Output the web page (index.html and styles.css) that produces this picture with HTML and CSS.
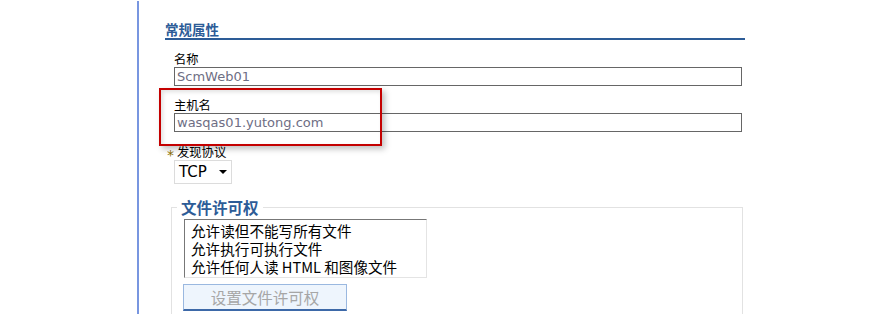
FILE: index.html
```html
<!DOCTYPE html>
<html lang="zh-CN">
<head>
    <meta charset="UTF-8">
    <title>常规属性</title>
    <link rel="stylesheet" href="styles.css">
</head>
<body>
    <div class="page">
        <div class="rail"></div>
        <div class="panel">
            <h2 class="section-title">常规属性</h2>
            <div class="fields">
                <div class="field">
                    <label class="field-label">名称</label>
                    <div class="text-box">ScmWeb01</div>
                </div>
                <div class="field host">
                    <div class="highlight"></div>
                    <label class="field-label">主机名</label>
                    <div class="text-box">wasqas01.yutong.com</div>
                </div>
                <div class="field">
                    <label class="field-label required"><span class="star">*</span>发现协议</label>
                    <div class="select-box">TCP <span class="caret"></span></div>
                </div>
            </div>
            <fieldset class="perm-group">
                <legend class="perm-title">文件许可权</legend>
                <div class="list-box">
                    <div class="list-item">允许读但不能写所有文件</div>
                    <div class="list-item">允许执行可执行文件</div>
                    <div class="list-item">允许任何人读 HTML 和图像文件</div>
                </div>
                <button class="perm-button">设置文件许可权</button>
            </fieldset>
        </div>
    </div>
</body>
</html>
```

FILE: styles.css
```css
body {
    margin: 0;
    padding: 0;
    background-color: #ffffff;
    font-family: "Noto Sans CJK SC", "DejaVu Sans", sans-serif;
    overflow: hidden;
}
.page {
    display: flex;
    height: 314px;
    overflow: hidden;
}
.rail {
    width: 137px;
    margin-top: 1px;
    border-right: 2px solid #7896e0;
    flex-shrink: 0;
}
.panel {
    margin-left: 26px;
    padding-top: 20px;
    width: 580px;
}
.section-title {
    margin: 0;
    font-size: 13.5px;
    line-height: 18px;
    font-weight: bold;
    color: #2d5c97;
    border-bottom: 2px solid #2d5c97;
}
.fields {
    padding-left: 9px;
    padding-top: 11px;
}
.field {
    margin-bottom: 11px;
}
.host {
    position: relative;
}
.field-label {
    display: block;
    height: 16px;
    font-size: 12.3px;
    line-height: 16px;
    color: #000000;
}
.required {
    margin-left: -7px;
    padding-top: 1px;
}
.star {
    font-family: "DejaVu Sans", sans-serif;
    font-size: 14px;
    line-height: 0;
    vertical-align: -3px;
    color: #8a6d00;
    margin-right: 3px;
}
.text-box {
    width: 564px;
    height: 17px;
    border: 1px solid #666666;
    font-family: "DejaVu Sans", sans-serif;
    font-size: 13px;
    line-height: 17px;
    color: #6e6e84;
    padding-left: 2px;
}
.highlight {
    position: absolute;
    left: -15px;
    top: -9px;
    width: 219px;
    height: 54px;
    border: 2px solid #c40000;
    box-shadow: 3px 3px 6px rgba(0,0,0,0.25), inset 2px 2px 4px rgba(0,0,0,0.12);
}
.select-box {
    display: flex;
    align-items: center;
    width: 52px;
    height: 22px;
    border: 1px solid #dcdcdc;
    font-family: "DejaVu Sans", sans-serif;
    font-size: 15px;
    color: #000000;
    padding-left: 4px;
}
.caret {
    width: 0;
    height: 0;
    margin-left: 12px;
    border-left: 4px solid transparent;
    border-right: 4px solid transparent;
    border-top: 4px solid #000000;
}
.perm-group {
    margin: 15px 0 0 6px;
    padding: 4px 0 20px 12px;
    width: 558px;
    border: 1px solid #e2e2e2;
    border-bottom: none;
}
.perm-title {
    padding: 0 4px;
    margin-left: -7px;
    font-size: 15.5px;
    line-height: 16px;
    font-weight: bold;
    color: #2d5c97;
}
.list-box {
    width: 235px;
    height: 55px;
    padding: 2px 0 0 6px;
    border-top: 1px solid #777777;
    border-left: 1px solid #777777;
    border-right: 1px solid #e4e4e4;
    border-bottom: 1px solid #e4e4e4;
    font-size: 14.6px;
    color: #000000;
}
.list-item {
    height: 18px;
    line-height: 18px;
}
.perm-button {
    display: block;
    margin-top: 6px;
    margin-left: -1px;
    width: 164px;
    height: 27px;
    background-color: #eef5fd;
    border: 1px solid #9ab8e0;
    border-bottom: 2px solid #3d69a8;
    font-family: "Noto Sans CJK SC", sans-serif;
    font-size: 15.5px;
    color: #a6a6a6;
    padding: 0;
}
```
